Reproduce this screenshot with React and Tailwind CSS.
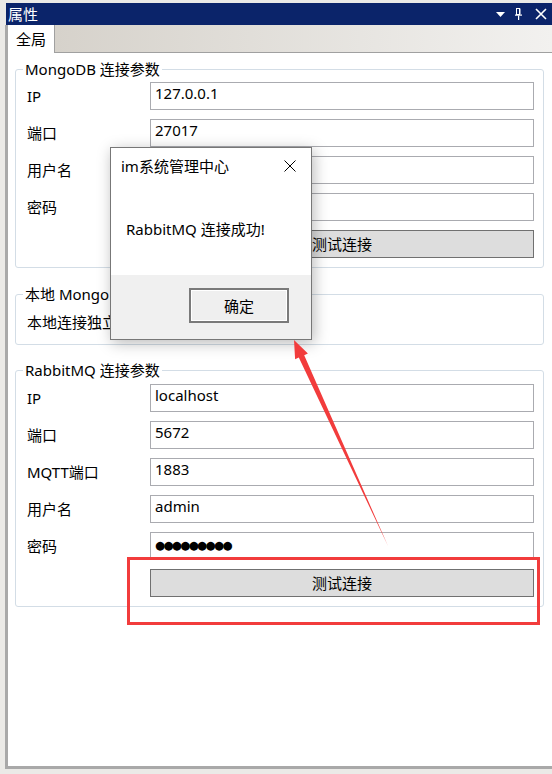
import React from "react";

function Row({ label, value, dots }) {
  return (
    <>
      <div className="flex items-center h-[28px] leading-[20px]">{label}</div>
      <div className="h-[28px] border border-[#aaabb0] bg-white pl-[4px] leading-[20px] whitespace-nowrap overflow-hidden">
        {dots ? (
          <span className="font-['DejaVu_Sans',sans-serif] text-[10px] tracking-[-1.4px] leading-[20px] inline-block scale-[1.15] origin-left">{value}</span>
        ) : (
          value
        )}
      </div>
    </>
  );
}

function TestButton() {
  return (
    <>
      <div />
      <div className="h-[28px] border border-[#707070] bg-[#dddddd] flex items-center justify-center leading-[20px]">
        测试连接
      </div>
    </>
  );
}

export default function App() {
  return (
    <div className="relative w-[552px] h-[774px] overflow-hidden bg-[#ebeae7] font-['Noto_Sans','Noto_Sans_CJK_SC',sans-serif] text-[15px] text-black">
      <div className="flex flex-col h-full pt-[3px] pb-[5px] pl-[5px]">
        {/* Title bar */}
        <div className="ml-[1px] h-[22px] bg-[#0b246a] flex items-center pl-[2px] pr-[5px] text-white">
          <span className="leading-[20px]">属性</span>
          <div className="ml-auto flex items-center">
            <svg width="9" height="5" viewBox="0 0 9 5" className="mt-[1px]">
              <polygon points="0,0 9,0 4.5,5" fill="#ffffff" />
            </svg>
            <svg width="7" height="12" viewBox="0 0 7 12" className="ml-[10px]">
              <rect x="1.5" y="0.5" width="3" height="6" fill="none" stroke="#ffffff" strokeWidth="1" />
              <rect x="4" y="0.5" width="1.5" height="6" fill="#ffffff" />
              <rect x="0" y="6.5" width="7" height="1.2" fill="#ffffff" />
              <rect x="3" y="7.5" width="1.2" height="4.5" fill="#ffffff" />
            </svg>
            <svg width="12" height="12" viewBox="0 0 12 12" className="ml-[13px]">
              <path d="M1 1 L11 11 M11 1 L1 11" stroke="#ffffff" strokeWidth="1.6" />
            </svg>
          </div>
        </div>

        <div className="flex-1 flex flex-col border-l-[3px] border-b-[3px] border-[#a9a9a9] min-h-0">
          {/* Tab strip */}
          <div className="h-[28px] flex">
            <div className="w-[47px] bg-white border-r border-[#a0a0a0] flex items-center justify-center leading-[20px]">
              全局
            </div>
            <div className="flex-1 border-b border-[#a0a0a0] bg-gradient-to-r from-[#d6d2cb] to-[#f2f1ef]" />
          </div>

          {/* Content */}
          <div className="flex-1 bg-white pl-[7px] pr-[8px]">
            <fieldset className="mt-[6px] border border-[#d3dde6] rounded-[3px] pl-[11px] pr-[9px] pt-[3px] pb-[9px]">
              <legend className="ml-[-4px] px-[2px] leading-[20px]">MongoDB 连接参数</legend>
              <div className="grid grid-cols-[123px_1fr] gap-y-[9px]">
                <Row label="IP" value="127.0.0.1" />
                <Row label="端口" value="27017" />
                <Row label="用户名" value="" />
                <Row label="密码" value="" />
                <TestButton />
              </div>
            </fieldset>

            <fieldset className="mt-[16px] border border-[#d3dde6] rounded-[3px] pl-[11px] pr-[9px] pt-[8px] pb-[12px]">
              <legend className="ml-[-4px] px-[2px] leading-[20px]">本地 MongoDB 服务</legend>
              <div className="leading-[20px]">本地连接独立配置，无需认证</div>
            </fieldset>

            <fieldset className="mt-[15px] border border-[#d3dde6] rounded-[3px] pl-[11px] pr-[9px] pt-[4px] pb-[9px]">
              <legend className="ml-[-4px] px-[2px] leading-[20px]">RabbitMQ 连接参数</legend>
              <div className="grid grid-cols-[123px_1fr] gap-y-[9px]">
                <Row label="IP" value="localhost" />
                <Row label="端口" value="5672" />
                <Row label="MQTT端口" value="1883" />
                <Row label="用户名" value="admin" />
                <Row label="密码" value="●●●●●●●●●" dots />
                <TestButton />
              </div>
            </fieldset>
          </div>
        </div>
      </div>

      {/* Message box */}
      <div className="absolute left-[110px] top-[147px] w-[202px] h-[193px] border border-[#777777] bg-white shadow-[2px_3px_14px_rgba(0,0,0,0.28)] flex flex-col">
        <div className="flex items-center pt-[8px] pl-[10px] pr-[15px]">
          <span className="leading-[20px]">im系统管理中心</span>
          <svg width="12" height="12" viewBox="0 0 12 12" className="ml-auto">
            <path d="M0.5 0.5 L11.5 11.5 M11.5 0.5 L0.5 11.5" stroke="#000000" strokeWidth="1" />
          </svg>
        </div>
        <div className="mt-[43px] pl-[15px] leading-[20px]">RabbitMQ 连接成功!</div>
        <div className="mt-auto h-[64px] bg-[#f0f0f0] flex justify-end pt-[13px] pr-[22px]">
          <div className="w-[100px] h-[35px] border-2 border-[#7a7a7a] bg-[#efefef] shadow-[inset_0_0_0_1px_#ffffff] flex items-center justify-center leading-[20px]">
            确定
          </div>
        </div>
      </div>

      {/* Red annotation rectangle */}
      <div className="absolute left-[127px] top-[557px] w-[413px] h-[68px] border-[3px] border-[#f23c3c]" />

      {/* Red arrow */}
      <svg className="absolute left-0 top-0 pointer-events-none" width="552" height="774" viewBox="0 0 552 774">
        <polygon
          points="294,340 307.9,353.5 304.2,355.2 388,546 298.8,357.6 295.1,359.3"
          fill="#f23c3c"
        />
      </svg>
    </div>
  );
}
